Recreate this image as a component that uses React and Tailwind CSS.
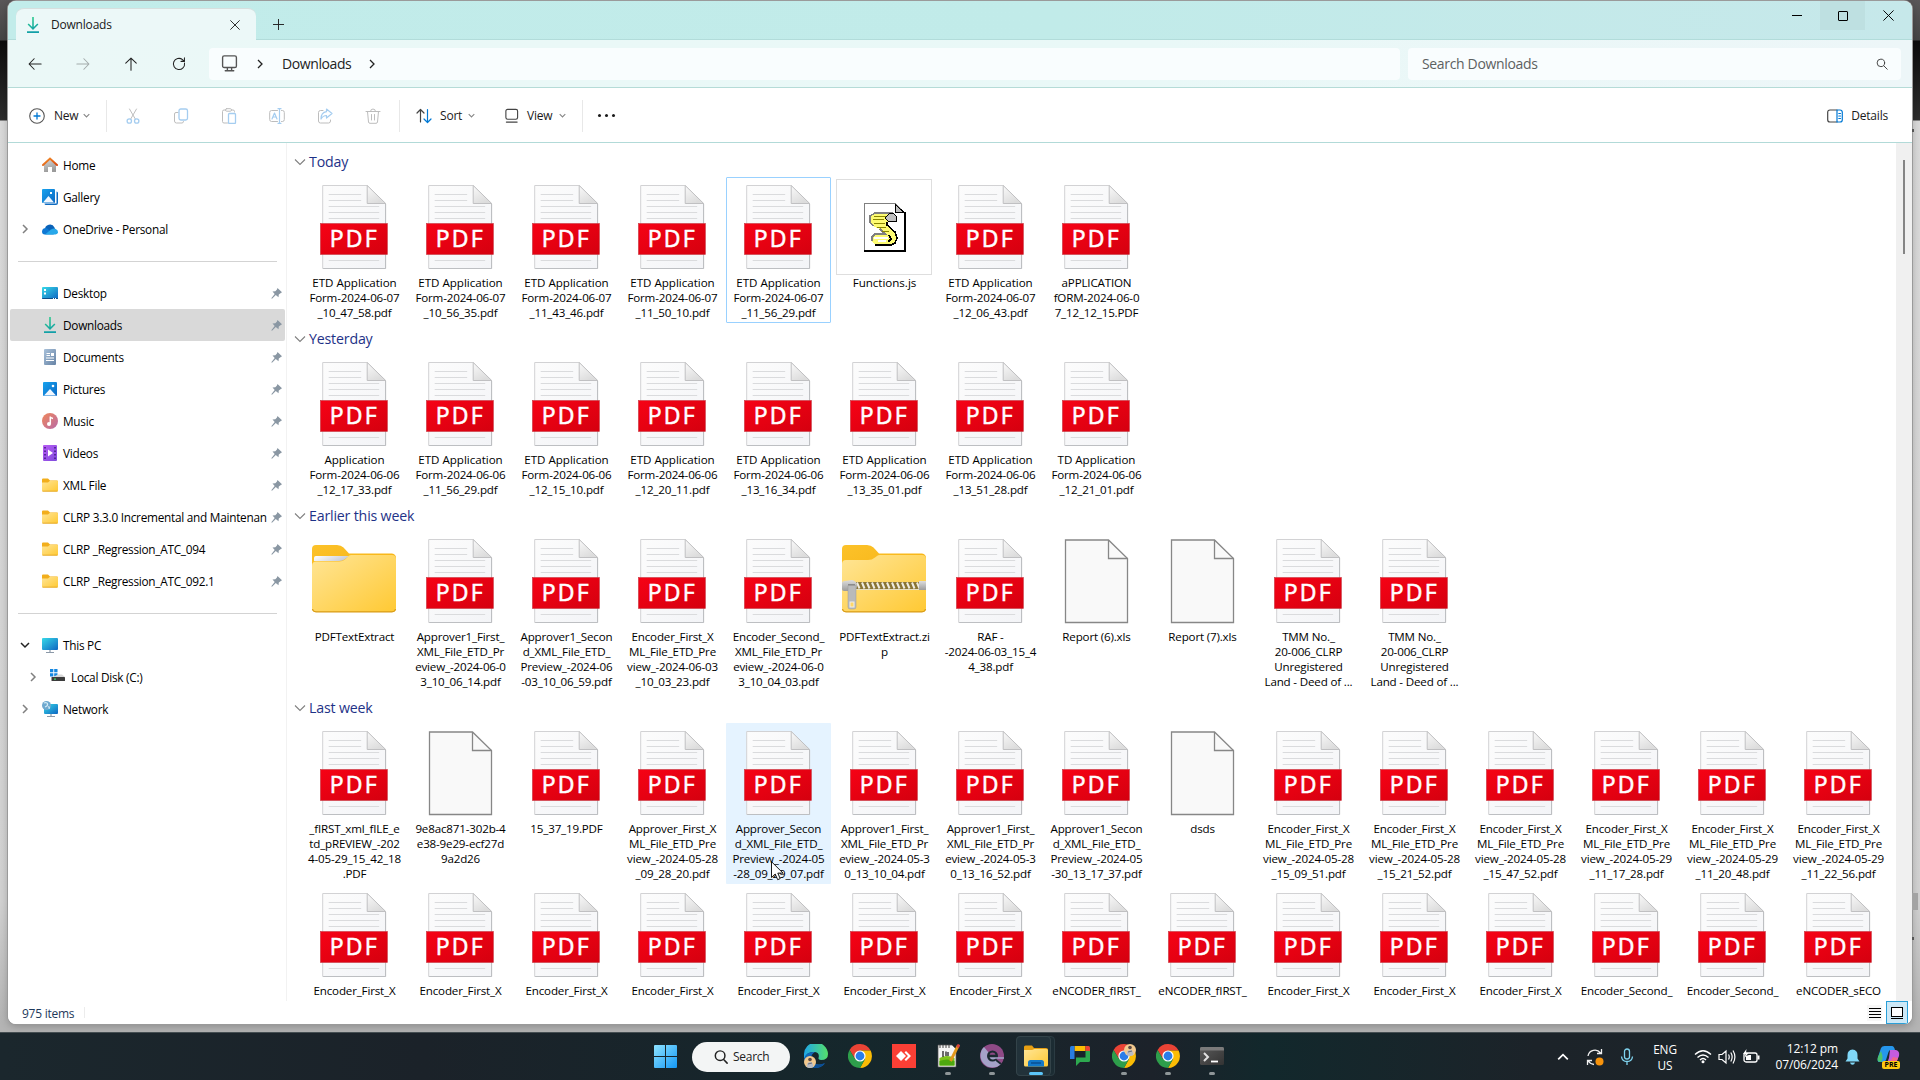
import React from "react";

const pdf = (...lines) => ({ kind: "pdf", lines });
const file = (...lines) => ({ kind: "blank", lines });

const groups = [
  {
    title: "Today",
    items: [
      pdf("ETD Application", "Form-2024-06-07", "_10_47_58.pdf"),
      pdf("ETD Application", "Form-2024-06-07", "_10_56_35.pdf"),
      pdf("ETD Application", "Form-2024-06-07", "_11_43_46.pdf"),
      pdf("ETD Application", "Form-2024-06-07", "_11_50_10.pdf"),
      { ...pdf("ETD Application", "Form-2024-06-07", "_11_56_29.pdf"), focused: true },
      { kind: "js", lines: ["Functions.js"] },
      pdf("ETD Application", "Form-2024-06-07", "_12_06_43.pdf"),
      pdf("aPPLICATION", "fORM-2024-06-0", "7_12_12_15.PDF"),
    ],
  },
  {
    title: "Yesterday",
    items: [
      pdf("Application", "Form-2024-06-06", "_12_17_33.pdf"),
      pdf("ETD Application", "Form-2024-06-06", "_11_56_29.pdf"),
      pdf("ETD Application", "Form-2024-06-06", "_12_15_10.pdf"),
      pdf("ETD Application", "Form-2024-06-06", "_12_20_11.pdf"),
      pdf("ETD Application", "Form-2024-06-06", "_13_16_34.pdf"),
      pdf("ETD Application", "Form-2024-06-06", "_13_35_01.pdf"),
      pdf("ETD Application", "Form-2024-06-06", "_13_51_28.pdf"),
      pdf("TD Application", "Form-2024-06-06", "_12_21_01.pdf"),
    ],
  },
  {
    title: "Earlier this week",
    items: [
      { kind: "folder", lines: ["PDFTextExtract"] },
      pdf("Approver1_First_", "XML_File_ETD_Pr", "eview_-2024-06-0", "3_10_06_14.pdf"),
      pdf("Approver1_Secon", "d_XML_File_ETD_", "Preview_-2024-06", "-03_10_06_59.pdf"),
      pdf("Encoder_First_X", "ML_File_ETD_Pre", "view_-2024-06-03", "_10_03_23.pdf"),
      pdf("Encoder_Second_", "XML_File_ETD_Pr", "eview_-2024-06-0", "3_10_04_03.pdf"),
      { kind: "zip", lines: ["PDFTextExtract.zi", "p"] },
      pdf("RAF -", "-2024-06-03_15_4", "4_38.pdf"),
      file("Report (6).xls"),
      file("Report (7).xls"),
      pdf("TMM No._", "20-006_CLRP", "Unregistered", "Land - Deed of ..."),
      pdf("TMM No._", "20-006_CLRP", "Unregistered", "Land - Deed of ..."),
    ],
  },
  {
    title: "Last week",
    items: [
      pdf("_fIRST_xml_fILE_e", "td_pREVIEW_-202", "4-05-29_15_42_18", ".PDF"),
      file("9e8ac871-302b-4", "e38-9e29-ecf27d", "9a2d26"),
      pdf("15_37_19.PDF"),
      pdf("Approver_First_X", "ML_File_ETD_Pre", "view_-2024-05-28", "_09_28_20.pdf"),
      { ...pdf("Approver_Secon", "d_XML_File_ETD_", "Preview_-2024-05", "-28_09_29_07.pdf"), hovered: true },
      pdf("Approver1_First_", "XML_File_ETD_Pr", "eview_-2024-05-3", "0_13_10_04.pdf"),
      pdf("Approver1_First_", "XML_File_ETD_Pr", "eview_-2024-05-3", "0_13_16_52.pdf"),
      pdf("Approver1_Secon", "d_XML_File_ETD_", "Preview_-2024-05", "-30_13_17_37.pdf"),
      file("dsds"),
      pdf("Encoder_First_X", "ML_File_ETD_Pre", "view_-2024-05-28", "_15_09_51.pdf"),
      pdf("Encoder_First_X", "ML_File_ETD_Pre", "view_-2024-05-28", "_15_21_52.pdf"),
      pdf("Encoder_First_X", "ML_File_ETD_Pre", "view_-2024-05-28", "_15_47_52.pdf"),
      pdf("Encoder_First_X", "ML_File_ETD_Pre", "view_-2024-05-29", "_11_17_28.pdf"),
      pdf("Encoder_First_X", "ML_File_ETD_Pre", "view_-2024-05-29", "_11_20_48.pdf"),
      pdf("Encoder_First_X", "ML_File_ETD_Pre", "view_-2024-05-29", "_11_22_56.pdf"),
      pdf("Encoder_First_X"),
      pdf("Encoder_First_X"),
      pdf("Encoder_First_X"),
      pdf("Encoder_First_X"),
      pdf("Encoder_First_X"),
      pdf("Encoder_First_X"),
      pdf("Encoder_First_X"),
      pdf("eNCODER_fIRST_"),
      pdf("eNCODER_fIRST_"),
      pdf("Encoder_First_X"),
      pdf("Encoder_First_X"),
      pdf("Encoder_First_X"),
      pdf("Encoder_Second_"),
      pdf("Encoder_Second_"),
      pdf("eNCODER_sECO"),
    ],
  },
];

/* Shared gradients */
function Defs() {
  const G = ({ id, a, b, x2 = 1, y2 = 1 }) => (
    <linearGradient id={id} x1="0" y1="0" x2={x2} y2={y2}>
      <stop offset="0" stopColor={a} />
      <stop offset="1" stopColor={b} />
    </linearGradient>
  );
  return (
    <svg className="absolute h-0 w-0">
      <defs>
        <G id="gPage" a="#fcfcfc" b="#f3f4f7" />
        <G id="gRed" a="#f60215" b="#d5000f" />
        <G id="gFold" a="#fafafa" b="#dcdcdc" x2={0.5} />
        <G id="gFolder" a="#ffe596" b="#ffc933" />
        <G id="gTab" a="#fcc22a" b="#f5ae0c" />
        <G id="gPaper" a="#ffffff" b="#c8ccd6" x2={1} y2={0.3} />
        <G id="gDl" a="#2fd08a" b="#129fa8" x2={0.3} />
        <G id="gBlue" a="#17a3ee" b="#0b68c4" />
        <G id="gDesk" a="#36d9e8" b="#0f66c2" />
        <G id="gDoc" a="#a9c1da" b="#6683a5" />
        <G id="gMusic" a="#f0875a" b="#b86aa8" />
        <G id="gVideo" a="#b95cf5" b="#7e4bdc" />
        <G id="gRoof" a="#f5922b" b="#d8470f" />
        <G id="gWall" a="#d9d9d9" b="#9b9b9b" x2={0.3} />
        <G id="gWin" a="#8fe3ff" b="#1397f5" />
        <G id="gMetal" a="#dddddd" b="#9c9c9c" x2={0} />
        <G id="gEdge" a="#1fa6e8" b="#55e06a" y2={0} />
        <G id="gTerm" a="#5a5a5a" b="#333333" />
      </defs>
    </svg>
  );
}

/* Large file icons, drawn in the upper part of a tile */
function PdfIcon() {
  return (
    <svg width="105" height="98" viewBox="0.8 0 105 98" className="block">
      <path d="M21.5 8.5H66L84.5 27V91.5H21.5Z" fill="url(#gPage)" stroke="#d2d2d4" />
      <path d="M84.3 27V91.5H22" fill="none" stroke="#bdbfc2" />
      <path d="M66 8.5V26.5H84.5Z" fill="url(#gFold)" stroke="#c0c0c2" />
      <path d="M27.500 17.500H60M27.500 23.500H60M27.500 29.500H78M27.500 35.500H78M27.500 41.500H78M27.500 83.500H78" stroke="#dadbdd" />
      <rect x="19.200" y="46.500" width="67" height="31" fill="url(#gRed)" stroke="#c93a44" strokeWidth="0.600" />
      <text x="28.500" y="70" textLength="47" fontSize="23" fill="#fff" stroke="#fff" strokeWidth="0.600" fontFamily="'Open Sans','Noto Sans',sans-serif">
        PDF
      </text>
    </svg>
  );
}

function BlankIcon() {
  return (
    <svg width="105" height="98" viewBox="0 0 105 98" className="block">
      <path d="M21.5 9H64.500L83.500 27.500V91.500H21.500Z" fill="#f9f9f9" stroke="#878787" strokeWidth="1.300" />
      <path d="M64.500 9V27.500H83.500" fill="none" stroke="#878787" strokeWidth="1.300" />
    </svg>
  );
}

function FolderIcon({ zip }) {
  const teeth = Array.from({ length: 13 }, (_, i) => 25 + i * 5);
  return (
    <svg width="105" height="98" viewBox="0 0 105 98" className="block">
      <path d="M10 18Q10 14 14 14H35Q39 14 41.500 16.500L47 22.500H90Q94 23 94 27V60H10Z" fill="url(#gTab)" />
      {!zip && <path d="M12 27Q12 25 14 25H47L43 28Q41 30 37 30H12Z" fill="url(#gPaper)" />}
      {zip ? (
        <path d="M10 33Q10 29 14 29H36Q40 29 43 26.500L45 25Q46 24 48 24H90Q94 24 94 28V77Q94 81 90 81H14Q10 81 10 77Z" fill="url(#gFolder)" />
      ) : (
        <path d="M10 35Q10 30.500 14 30.500H37Q41 30.500 43.500 28L46 25.500Q47 24 49 24H90Q94 24 94 28V77Q94 81 90 81H14Q10 81 10 77Z" fill="url(#gFolder)" />
      )}
      <path d="M10.500 78Q11 80.800 14 80.800H90Q93 80.800 93.500 78" fill="none" stroke="#d99c17" strokeWidth="1.200" />
      {zip && (
        <g>
          <rect x="24" y="51" width="64" height="7" fill="#8a7433" />
          {teeth.map((x) => (
            <path key={x} d={`M${x} 51.500L${x + 2.500} 57.500`} stroke="#efece2" strokeWidth="2" />
          ))}
          <path d="M24 58.500H88" stroke="#e8dfc0" />
          <rect x="87" y="50" width="7" height="9" fill="url(#gMetal)" />
          <path d="M10 52Q10 50 13 50L20 49Q25 50 25 55T20 60H12Q10 60 10 58Z" fill="url(#gMetal)" />
          <path d="M16 54H23" stroke="#777" strokeWidth="1.500" />
          <path d="M16 54.500H24V76Q24 78 22 78H18Q16 78 16 76Z" fill="#b9babb" stroke="#9a9a9a" strokeWidth="0.500" />
          <rect x="18" y="71" width="4" height="5" fill="#ffd768" stroke="#eee" />
        </g>
      )}
    </svg>
  );
}

function JsIcon() {
  return (
    <svg width="105" height="98" viewBox="1 0 105 98" className="block" shapeRendering="crispEdges">
      <rect x="5.500" y="2.500" width="95" height="95" fill="#fff" stroke="#dedede" />
      <path d="M33.500 26.500H64L73 35.500V73H33.500Z" fill="#fff" stroke="#808080" />
      <path d="M64 27V35.500H73Z" fill="#c0c0c0" stroke="#000" />
      <path d="M73.500 35V73.500H33" fill="none" stroke="#000" strokeWidth="2" />
      <g transform="translate(1 0)">
        <path
          d="M43 36H61L64 39V44L60 45L55 45V49L63 55L65 61L63 66L59 68H43L40 64V60L43 57H53L48 52L41 49L38 45V39Z"
          fill="#fdfb72"
        />
        <path d="M41 49L38 45V39L43 36H61M40 64V60L43 57H53L48 52" fill="none" stroke="#808080" strokeWidth="1.500" />
        <path d="M61 36L64 39V44H56L53 41L57 37Z" fill="#c0c0c0" stroke="#000" />
        <path d="M55 45V48L63 55L65 61L63 66L59 68H43M57 58L59 62L56 65" fill="none" stroke="#000" strokeWidth="1.500" />
        <path d="M42 39H54M41 42H52M42 46H53M45 50H54M50 54H57" stroke="#8a8500" />
        <path d="M42 61H56M46 64H54" stroke="#fff" strokeWidth="2" />
      </g>
    </svg>
  );
}

function TileIcon({ kind }) {
  if (kind === "pdf") return <PdfIcon />;
  if (kind === "blank") return <BlankIcon />;
  if (kind === "js") return <JsIcon />;
  return <FolderIcon zip={kind === "zip"} />;
}

function Tile({ item }) {
  const state = item.focused
    ? "outline outline-1 -outline-offset-1 outline-[#99d1ff] rounded-[1px]"
    : item.hovered
      ? "bg-[#e5f3ff] rounded-[1px]"
      : "";
  return (
    <div className={`w-[105px] pb-[3px] ${state}`}>
      <TileIcon kind={item.kind} />
      <div className="flex flex-col items-center text-[11.6px] leading-[15px] tracking-[-0.17px] whitespace-pre text-black">
        {item.lines.map((l, i) => (
          <span key={i} className={/Applic|Functions/.test(l) ? "tracking-[-0.03px]" : ""}>
            {l}
          </span>
        ))}
      </div>
    </div>
  );
}

function Group({ group }) {
  return (
    <section>
      <h2 className="flex h-[31px] items-center gap-[3px] pl-[7px] text-[14.2px] font-normal tracking-[-0.18px] text-[#1e3287]">
        <svg width="12" height="8" viewBox="0 0 12 8" fill="none" stroke="#808080" strokeWidth="1.100">
          <path d="M1 1.500L6 6.500L11 1.500" />
        </svg>
        {group.title}
      </h2>
      <div className="grid grid-cols-[repeat(15,105px)] gap-px pl-[15px]">
        {group.items.map((it, i) => (
          <Tile key={i} item={it} />
        ))}
      </div>
    </section>
  );
}

/* Sidebar icons, 16 x 16 */
const sideIcons = {
  home: (
    <>
      <path d="M2 7L8 2L14 7V14.500Q14 15 13.500 15H10V10H6V15H2.500Q2 15 2 14.500Z" fill="url(#gWall)" />
      <path d="M1 8L8 1.500L15 8" fill="none" stroke="url(#gRoof)" strokeWidth="2" strokeLinecap="round" />
    </>
  ),
  gallery: (
    <>
      <path d="M14.500 2.500Q16 2.500 16 4V14Q16 16 14 16H4Q2.500 16 2.500 14.500H14.500Z" fill="#0f6bc0" />
      <rect width="13" height="14" rx="1" fill="url(#gBlue)" />
      <path d="M1 13.500L6.500 7L12 13.500Z" fill="#f2f8ff" />
      <rect x="8" y="3" width="2" height="2" fill="#fff" />
    </>
  ),
  cloud: (
    <>
      <path d="M3 9A5 5 0 0 1 12.500 6.500L14 11L4 13Z" fill="#0a62b8" />
      <path d="M0 10.500A3.500 3.500 0 0 1 5 7.300L12 13.500H3.300A3 3 0 0 1 0 10.500Z" fill="#0f78d4" />
      <path d="M3 13.500L9 8.500Q13 6 15.500 9.500Q17 13 13.500 13.500Z" fill="#28a8ea" />
    </>
  ),
  desktop: (
    <>
      <rect y="2" width="16" height="12" rx="1" fill="url(#gDesk)" />
      <path d="M2 4H4V6H2ZM2 7.500H4V9.500H2Z" fill="#fff" />
      <path d="M0 13H16V13.500Q16 14 15 14H1Q0 14 0 13Z" fill="#0b4f8a" />
      <path d="M11 13.500H12M13 13.500H14" stroke="#fff" />
    </>
  ),
  downloads: (
    <path
      d="M7.200 0H8.800V10L12.300 6.500L13.400 7.600L8 13L2.600 7.600L3.700 6.500L7.200 10ZM2 14.300H14V15.900H2Z"
      fill="url(#gDl)"
    />
  ),
  documents: (
    <>
      <rect x="2" width="12" height="16" rx="1" fill="url(#gDoc)" />
      <path d="M4.500 4.500H8M4.500 6.500H8M4 9H12M4 11.500H12" stroke="#fff" />
      <rect x="9" y="4" width="3" height="3" fill="#fff" />
    </>
  ),
  pictures: (
    <>
      <rect x="1" y="1" width="14" height="14" rx="1" fill="url(#gBlue)" />
      <path d="M2 14.500L8 8L14 14.500Z" fill="#f2f8ff" />
      <circle cx="11" cy="5" r="1.300" fill="#fff" />
    </>
  ),
  music: (
    <>
      <circle cx="8" cy="8" r="8" fill="url(#gMusic)" />
      <circle cx="7" cy="11" r="2" fill="#fff" />
      <path d="M8.300 11V3.500Q8.500 5 11 5.500" fill="none" stroke="#fff" strokeWidth="1.500" />
    </>
  ),
  videos: (
    <>
      <rect x="1" width="14" height="16" rx="1" fill="url(#gVideo)" />
      <path d="M3 2V15M13 2V15" stroke="#3f1a80" strokeWidth="1.500" strokeDasharray="1.500 2" />
      <path d="M6 4.500L11 8L6 11.500Z" fill="#fff" />
    </>
  ),
  folder: (
    <>
      <path d="M0 2.500Q0 1.500 1 1.500H6L8 3.500H15Q16 3.500 16 4.500V10H0Z" fill="#f2ae1c" />
      <path d="M0 5.500H6L8 3.800H15Q16 3.800 16 4.800V13.500Q16 14.500 15 14.500H1Q0 14.500 0 13.500Z" fill="url(#gFolder)" />
      <path d="M0.500 14.200H15.500" stroke="#e0a01c" strokeWidth="0.800" />
    </>
  ),
  pc: (
    <>
      <rect y="1" width="16" height="12" rx="1" fill="url(#gDesk)" />
      <path d="M8 13V15.500M4 15.500H12" stroke="#8b99a8" strokeWidth="1.200" />
    </>
  ),
  disk: (
    <>
      <path d="M0 0H3.300V3.300H0ZM4.200 0H7.500V3.300H4.200ZM0 4.200H3.300V7.500H0ZM4.200 4.200H7.500V7.500H4.200Z" fill="#1587e0" />
      <path d="M3 8L8 5.500H12L15 8Z" fill="#d8d8d8" />
      <rect x="1.500" y="8" width="13.500" height="4" rx="0.500" fill="#3c3c3c" />
      <rect x="4" y="9.500" width="2" height="1.200" fill="#3ce06c" />
    </>
  ),
  network: (
    <>
      <rect x="2" y="3" width="14" height="10" rx="1" fill="url(#gDesk)" />
      <path d="M9 13V15.500M5 15.500H13" stroke="#8b99a8" strokeWidth="1.200" />
      <circle cx="4.500" cy="4.500" r="4.500" fill="#6fa9cf" />
      <path d="M2 2Q5 1 5.500 3T3 6M6 6Q8 5 7 8" fill="none" stroke="#d5ecf6" strokeWidth="1.200" />
    </>
  ),
};

function Chevron({ dir = "right", className = "", size = 9, w = 1.3 }) {
  const d = dir === "right" ? "M3 1L7 5L3 9" : dir === "up" ? "M1 7L5 3L9 7" : "M1 3L5 7L9 3";
  return (
    <svg width={size} height={size} viewBox="0 0 10 10" fill="none" stroke="currentColor" strokeWidth={w} className={`shrink-0 ${className}`}>
      <path d={d} />
    </svg>
  );
}

function Pin() {
  return (
    <svg width="11" height="11" viewBox="0 0 11 11" className="shrink-0" fill="#8a97a3">
      <path d="M6.500 0L11 4.300L9.500 5.300L7.800 6.500L7.500 9.300L4.800 7L1 10.800L0.300 10.200L3.700 6L1.500 3.500L4.300 3.200L5.800 1.800Z" />
    </svg>
  );
}

function SideRow({ icon, label, pinned, expand, active, nested }) {
  return (
    <div className={`mr-[1px] ml-[2px] flex h-8 items-center rounded-[2px] pr-[3px] ${active ? "bg-[#d9d9d9]" : ""} ${nested ? "pl-[18px]" : "pl-[10px]"}`}>
      <div className="flex w-[22px] shrink-0 items-center">
        {expand === "right" && <Chevron className="text-[#808080]" size={10} w={1.5} />}
        {expand === "down" && <Chevron dir="down" className="text-[#222]" size={10} w={1.5} />}
      </div>
      <svg width="16" height="16" viewBox="0 0 16 16" className="shrink-0">
        {sideIcons[icon]}
      </svg>
      <span className="ml-[5px] flex-1 text-[11.8px] leading-4 tracking-[-0.26px] whitespace-nowrap text-black">{label}</span>
      {pinned && <Pin />}
    </div>
  );
}

function SideRule() {
  return (
    <div className="flex h-8 items-center pr-[9px] pl-[10px]">
      <div className="h-px w-full bg-[#d3d3d3]" />
    </div>
  );
}

function Sidebar() {
  return (
    <nav className="w-[279px] shrink-0 border-r border-[#f2f2f2] pt-[6px]">
      <SideRow icon="home" label="Home" />
      <SideRow icon="gallery" label="Gallery" />
      <SideRow icon="cloud" label="OneDrive - Personal" expand="right" />
      <SideRule />
      <SideRow icon="desktop" label="Desktop" pinned />
      <SideRow icon="downloads" label="Downloads" pinned active />
      <SideRow icon="documents" label="Documents" pinned />
      <SideRow icon="pictures" label="Pictures" pinned />
      <SideRow icon="music" label="Music" pinned />
      <SideRow icon="videos" label="Videos" pinned />
      <SideRow icon="folder" label="XML File" pinned />
      <SideRow icon="folder" label="CLRP 3.3.0 Incremental and Maintenan" pinned />
      <SideRow icon="folder" label="CLRP _Regression_ATC_094" pinned />
      <SideRow icon="folder" label="CLRP _Regression_ATC_092.1" pinned />
      <SideRule />
      <SideRow icon="pc" label="This PC" expand="down" />
      <SideRow icon="disk" label="Local Disk (C:)" expand="right" nested />
      <SideRow icon="network" label="Network" expand="right" />
    </nav>
  );
}

function Svg({ size = 16, children, className = "", w = 1, stroke = "currentColor" }) {
  return (
    <svg width={size} height={size} viewBox="0 0 16 16" fill="none" stroke={stroke} strokeWidth={w} strokeLinecap="round" strokeLinejoin="round" className={`shrink-0 ${className}`}>
      {children}
    </svg>
  );
}

function TitleBar() {
  return (
    <div className="flex h-[39px] border-b border-[#b2dcda] bg-[linear-gradient(90deg,#c2ecea_0%,#c1ebe9_55%,#c6e8ea_100%)]">
      <div className="mt-[7px] ml-2 flex h-8 w-[240px] items-center rounded-t-lg border-t border-[#d7dfde] bg-[#ecf8f8] pr-[16px] pl-[9px] shadow-[0_1px_0_#ecf8f8]">
        <svg width="16" height="16" viewBox="0 0 16 16" className="shrink-0">
          {sideIcons.downloads}
        </svg>
        <span className="ml-[10px] flex-1 text-[12px] font-medium tracking-[-0.2px] text-[#1a1a1a]">Downloads</span>
        <Svg size={10} className="text-[#222]" w={1.5}>
          <path d="M1 1L15 15M15 1L1 15" />
        </Svg>
      </div>
      <div className="flex w-11 items-center justify-center pt-[8px]">
        <Svg size={11} className="text-[#222]" w={1.4}>
          <path d="M8 0.500V15.500M0.500 8H15.500" />
        </Svg>
      </div>
      <div className="flex-1" />
      <div className="flex h-[29px] text-black">
        <div className="flex w-[46px] items-center justify-center">
          <div className="h-px w-[10px] bg-black" />
        </div>
        <div className="flex w-[45px] items-center justify-center bg-[#bee0e1]">
          <div className="h-[10px] w-[10px] rounded-[1px] border border-black" />
        </div>
        <div className="flex w-[47px] items-center justify-center pb-px">
          <Svg size={11} w={1.4}>
            <path d="M1 1L15 15M15 1L1 15" />
          </Svg>
        </div>
      </div>
    </div>
  );
}

function NavBar() {
  const cell = "flex w-12 items-center justify-center";
  return (
    <div className="flex h-12 items-center border-b border-[#b5dbd7] bg-[linear-gradient(90deg,#ebf8f7_0%,#e9f8f7_60%,#edf6f8_100%)] pr-[11px] pl-[3px] text-[#222]">
      <div className={cell}>
        <Svg size={14} w={1.2}><path d="M1.500 8H15M7 2L1.200 8L7 14" /></Svg>
      </div>
      <div className={`${cell} text-[#a3abab]`}>
        <Svg size={14} w={1.2}><path d="M14.500 8H1M9 2L14.800 8L9 14" /></Svg>
      </div>
      <div className={cell}>
        <Svg size={14} w={1.2}><path d="M8 1.500V15M2 7L8 1.200L14 7" /></Svg>
      </div>
      <div className={cell}>
        <Svg size={14} w={1.2}><path d="M14.300 7A6.400 6.400 0 1 1 12 3L14 5M14.200 1V5H10.300" /></Svg>
      </div>
      <div className="ml-[6px] flex h-8 w-[1191px] items-center rounded bg-[#f9fdfe] pl-[12px]">
        <Svg size={17} w={1.3} className="text-[#555]">
          <rect x="1.500" y="0.800" width="13" height="11" rx="1.500" />
          <path d="M4 14.800H12M6 12V14.500M10 12V14.500" />
        </Svg>
        <Chevron className="ml-[17px]" size={10} />
        <span className="ml-[17px] w-[70px] text-[14px] tracking-[-0.4px]">Downloads</span>
        <Chevron className="ml-[15px]" size={10} />
      </div>
      <div className="ml-2 flex h-8 flex-1 items-center rounded bg-[#f9fdfe] pr-[13px] pl-[14px]">
        <span className="flex-1 text-[14px] tracking-[-0.34px] text-[#5d6161]">Search Downloads</span>
        <Svg size={12} w={1.3} className="text-[#444]">
          <circle cx="6.500" cy="6.500" r="5" />
          <path d="M10.500 10.500L15 15" />
        </Svg>
      </div>
    </div>
  );
}

function ToolBar() {
  const g = "#bdbdbd";
  const b = "#a5cdf0";
  const rule = <div className="h-8 w-px bg-[#e8e8e8]" />;
  const cell = "flex w-12 items-center justify-center";
  const label = "pt-px text-[12px] tracking-[-0.2px] text-[#1a1a1a]";
  return (
    <div className="flex h-[55px] items-center border-b border-[#b2dad8] bg-white pt-px pr-[24px] pl-[21px]">
      <Svg size={16} className="text-[#555]" w={1.1}>
        <circle cx="8" cy="8" r="7.300" />
        <path d="M8 5V11M5 8H11" stroke="#0078d4" strokeWidth="1.300" />
      </Svg>
      <span className={`ml-[9px] w-[26px] ${label}`}>New</span>
      <Chevron dir="down" size={7} className="ml-[3px] text-[#888]" w={1.6} />
      <div className="w-4" />
      {rule}
      <div className="w-[2px]" />
      <div className={cell}>
        <Svg stroke={g}>
          <path d="M4.500 1L10.300 11M11.500 1L5.700 11" />
          <g stroke={b} strokeWidth="1.300"><circle cx="4.300" cy="13" r="2.200" /><circle cx="11.700" cy="13" r="2.200" /></g>
        </Svg>
      </div>
      <div className={cell}>
        <Svg stroke={g}>
          <path d="M5 4.500H3Q1.500 4.500 1.500 6V13Q1.500 15 3.500 15H9Q10.500 15 10.500 13.500" />
          <rect x="6" y="1" width="8.500" height="11" rx="1.800" stroke={b} strokeWidth="1.300" />
        </Svg>
      </div>
      <div className={cell}>
        <Svg stroke={g}>
          <path d="M4.500 2H3Q1.500 2 1.500 3.500V13.500Q1.500 15 3 15H6.500M10.500 2H12Q13.500 2 13.500 3.500V4" />
          <rect x="4.500" y="0.700" width="6" height="2.500" rx="1.200" />
          <rect x="7.500" y="5.500" width="7" height="10" rx="1" stroke={b} strokeWidth="1.300" />
        </Svg>
      </div>
      <div className={cell}>
        <Svg stroke={g}>
          <path d="M8.500 2.500H2.500Q0.700 2.500 0.700 4.500V11.500Q0.700 13.500 2.500 13.500H8.500M12.500 2.500H13.500Q15.300 2.500 15.300 4.500V11.500Q15.300 13.500 13.500 13.500H12.500" />
          <path d="M10.500 0.700V15.300M9 0.700H12M9 15.300H12M3 11L5.500 5L8 11M4 9H7" stroke={b} strokeWidth="1.200" />
        </Svg>
      </div>
      <div className={cell}>
        <Svg stroke={g}>
          <path d="M6 2.500H3.500Q1.500 2.500 1.500 4.500V13Q1.500 15 3.500 15H11.500Q13.500 15 13.500 13V12" />
          <path d="M9.500 1L15 5.500L9.500 10V7.500Q6 7.500 4 11Q4 4.500 9.500 3.700Z" stroke={b} strokeWidth="1.200" />
        </Svg>
      </div>
      <div className={cell}>
        <Svg stroke={g}>
          <path d="M1 3.500H15M5.500 3.500Q5.500 1 8 1T10.500 3.500M2.500 3.500L3.500 14Q3.700 15.300 5 15.300H11Q12.300 15.300 12.500 14L13.500 3.500M6.500 6.500V12M9.500 6.500V12" />
        </Svg>
      </div>
      <div className="w-[2px]" />
      {rule}
      <Svg className="ml-[16px] text-[#444]" w={1.2}>
        <path d="M4.500 14V1.500M1 5L4.500 1.500L8 5" />
        <path d="M11.500 1.500V14.500M8 11L11.500 14.500L15 11" stroke="#0078d4" />
      </Svg>
      <span className={`ml-[8px] w-[25px] ${label}`}>Sort</span>
      <Chevron dir="down" size={7} className="ml-[3px] text-[#888]" w={1.6} />
      <Svg size={15} className="ml-[29px] text-[#444]" w={1.2}>
        <rect x="2" y="1.500" width="12.500" height="10.500" rx="1.800" />
        <path d="M2.500 15H14" />
      </Svg>
      <span className={`ml-[8px] w-[29px] ${label}`}>View</span>
      <Chevron dir="down" size={7} className="ml-[3px] text-[#888]" w={1.6} />
      <div className="w-4" />
      {rule}
      <div className="ml-[15px] flex gap-[4px]">
        <i className="h-[3px] w-[3px] rounded-full bg-[#1a1a1a]" />
        <i className="h-[3px] w-[3px] rounded-full bg-[#1a1a1a]" />
        <i className="h-[3px] w-[3px] rounded-full bg-[#1a1a1a]" />
      </div>
      <div className="flex-1" />
      <Svg size={16} className="text-[#444]" w={1.2}>
        <path d="M10 2H3Q0.700 2 0.700 4.300V11.700Q0.700 14 3 14H10" />
        <path d="M10 2H13Q15.300 2 15.300 4.300V11.700Q15.300 14 13 14H10ZM11.800 5.500H13.500M11.800 8H13.500M11.800 10.500H13.500" stroke="#0078d4" />
      </Svg>
      <span className={`ml-[8px] ${label}`}>Details</span>
    </div>
  );
}

function StatusBar() {
  return (
    <div className="flex h-[23px] items-center bg-white pr-[4px] pl-[14px]">
      <span className="pt-[2px] text-[12px] tracking-[-0.25px] text-[#1e395b]">975 items</span>
      <div className="ml-[10px] h-[11px] w-px bg-[#ececec]" />
      <div className="flex-1" />
      <div className="mr-1 flex h-4 w-[15px] flex-col items-center justify-center gap-[2px] bg-[#f7f7f7]">
        {[0, 1, 2, 3].map((i) => (
          <i key={i} className="h-px w-3 bg-black" />
        ))}
      </div>
      <div className="flex h-[23px] w-[22px] flex-col items-center justify-center gap-px border border-[#2a9fd8] bg-[#cde8f6] pt-px">
        <div className="h-[10px] w-3 border border-black bg-white" />
        <div className="h-px w-3 bg-black" />
      </div>
    </div>
  );
}

function Cursor() {
  return (
    <svg width="13" height="20" viewBox="0 0 13 20" className="absolute top-[861px] left-[771px] z-10">
      <path d="M0.500 0.700V16.500L4.200 13L6.700 18.700L9.200 17.600L6.800 12.100H12Z" fill="#fff" stroke="#000" strokeWidth="0.900" />
    </svg>
  );
}

/* Scrollbar of the page behind the window, visible at the right edge */
function BackdropScrollbar() {
  return (
    <div className="flex w-[8px] flex-col items-start pt-[129px] text-[#555]">
      <div className="h-[3px] w-[2px] bg-current" />
      <div className="mt-[761px] h-[17px] w-[6px] bg-[#a3a3a3]" />
      <div className="mt-[27px] h-[3px] w-[2px] bg-current" />
    </div>
  );
}

/* Taskbar */
function Chrome() {
  return (
    <svg width="24" height="24" viewBox="0 0 24 24">
      <path d="M12 6.500H22.600A12 12 0 0 0 1.600 6L7 15Z" fill="#ea4335" />
      <path d="M17 15L12 24A12 12 0 0 0 22.600 6.500H12Z" fill="#fbbc05" />
      <path d="M7 15L1.600 6A12 12 0 0 0 12 24L17 15Z" fill="#2e9e4b" />
      <circle cx="12" cy="12" r="5.600" fill="#fff" />
      <circle cx="12" cy="12" r="4.400" fill="#2b7de9" />
    </svg>
  );
}

function Avatar({ className }) {
  return (
    <svg width="12" height="12" viewBox="0 0 12 12" className={`absolute ${className}`}>
      <circle cx="6" cy="6" r="6" fill="#f3c98e" />
      <circle cx="6" cy="3.500" r="1.800" fill="#5d4a44" />
      <path d="M2.500 11Q3 6 6 5.800T9.500 11Q6 13 2.500 11Z" fill="#b9bcc4" />
      <path d="M4 8L8 7" stroke="#6d6a72" />
    </svg>
  );
}

const taskIcons = [
  {
    id: "edge",
    node: (
      <>
        <svg width="24" height="24" viewBox="0 0 24 24">
          <path d="M0 11A12 12 0 0 1 24 10Q24 16 17 16Q14 16 14.500 14Q16 9 11 8Q3 7 0 15Z" fill="url(#gEdge)" />
          <path d="M0 15Q2 7 11 8Q7 10 7 15Q9 21 16 20.500L21 19.500Q17 24 11 24Q2 23 0 15Z" fill="#1268b8" />
          <path d="M9 12Q6 20 15 21L21 19Q17 24 11 24Q3 20 9 12Z" fill="#0c4d94" />
        </svg>
        <Avatar className="bottom-0 left-0" />
      </>
    ),
  },
  { id: "chrome", node: <Chrome /> },
  {
    id: "anydesk",
    node: (
      <svg width="24" height="24" viewBox="0 0 24 24">
        <rect width="24" height="24" fill="#fb3f35" />
        <path d="M9 7L14 12L9 17L4 12Z" fill="#fff" />
        <path d="M12.500 8.500L14 7L19 12L14 17L12.500 15.500L16 12Z" fill="#fff" />
      </svg>
    ),
  },
  {
    id: "notepad",
    run: true,
    node: (
      <svg width="24" height="24" viewBox="0 0 24 24">
        <path d="M2 1H16L20 5V23H2Z" fill="#f5f5f5" stroke="#555" strokeWidth="0.700" />
        <path d="M3.500 14Q11 10 18.500 14V21.500H3.500Z" fill="#7fc31c" />
        <path d="M3.500 17Q11 14 18.500 17V21.500H3.500Z" fill="#4ea80f" />
        <path d="M4 1V4M7 1V4M10 1V4M13 1V4" stroke="#444" />
        <path d="M7 7V13M10 7.500V12M12 8V12" stroke="#222" strokeWidth="1.300" />
        <path d="M22 2L14.500 17" stroke="#e3981c" strokeWidth="2.800" />
        <path d="M23 0.500L21.500 3.500" stroke="#d8433b" strokeWidth="2.800" />
      </svg>
    ),
  },
  {
    id: "eclipse",
    run: true,
    node: (
      <svg width="24" height="24" viewBox="0 0 24 24">
        <circle cx="12" cy="12" r="12" fill="#8f4a86" />
        <path d="M4 3A12 12 0 1 0 21 20L14 14L9 9Z" fill="#a5a3c9" />
        <circle cx="12.500" cy="12" r="5.500" fill="#1b2a31" />
        <path d="M9.500 10.800Q10 8.500 12.500 8.500T15.500 10.800Z" fill="#8f4a86" />
        <path d="M9.500 13.200H24V14.800H15.500Q14 15.800 12.500 15.500Q10.500 15.500 9.500 13.200Z" fill="#a5a3c9" />
        <path d="M16 16L21 20" stroke="#1b2a31" strokeWidth="1.800" />
      </svg>
    ),
  },
  {
    id: "explorer",
    run: true,
    active: true,
    node: (
      <svg width="24" height="24" viewBox="0 0 24 24">
        <path d="M0 3Q0 1.500 1.500 1.500H8L10 4H22Q24 4 24 5.500V12H0Z" fill="#e8a013" />
        <path d="M0 6H8L10.500 5H22.500Q24 5 24 6.500V21Q24 22.500 22.500 22.500H1.500Q0 22.500 0 21Z" fill="url(#gFolder)" />
        <path d="M4 22.500V18.500Q4 16 6.500 16H17.500Q20 16 20 18.500V22.500Z" fill="#1278c8" />
        <path d="M7 19H17" stroke="#0a4f92" strokeWidth="1.500" />
      </svg>
    ),
  },
  {
    id: "chat",
    node: (
      <svg width="20" height="20" viewBox="0 0 20 20">
        <path d="M4.500 0H15.500V5H4.500Z" fill="#fbbc04" />
        <path d="M0 5V1.500Q0 0 1.500 0H4.500V13H0Z" fill="#2a7de1" />
        <path d="M15.500 0H18.500Q20 0 20 1.500V5H15.500Z" fill="#ea4335" />
        <path d="M15.500 5H20V14.500Q20 16 18.500 16H10L6 20V11.500H15.500Z" fill="#2da94f" />
      </svg>
    ),
  },
  {
    id: "chrome-profile",
    run: true,
    node: (
      <>
        <Chrome />
        <Avatar className="top-0 right-0" />
      </>
    ),
  },
  { id: "chrome-2", run: true, node: <Chrome /> },
  {
    id: "terminal",
    run: true,
    node: (
      <svg width="24" height="18" viewBox="0 0 24 18">
        <rect width="24" height="18" rx="1.500" fill="url(#gTerm)" />
        <path d="M0 1.500Q0 0 1.500 0H22.500Q24 0 24 1.500V3.500H0Z" fill="#7b7b7b" />
        <path d="M4 6L8 10L4 14" fill="none" stroke="#e0e0e0" strokeWidth="2" />
        <path d="M11 14.500H18" stroke="#fff" strokeWidth="1.800" />
      </svg>
    ),
  },
];

function Taskbar() {
  return (
    <footer className="flex h-12 items-stretch border-t border-[#454e52] bg-[linear-gradient(90deg,#1b272d_0%,#1b2229_22%,#15272c_45%,#1c222a_60%,#12282c_66%,#1c2329_80%,#1c262b_100%)] text-white">
      <div className="flex items-center pl-[654px]">
        <svg width="23" height="23" viewBox="0 0 23 23">
          <path d="M0 1Q0 0 1 0H11V11H0ZM12 0H22Q23 0 23 1V11H12ZM0 12H11V23H1Q0 23 0 22ZM12 12H23V22Q23 23 22 23H12Z" fill="url(#gWin)" />
        </svg>
        <div className="ml-[15px] flex h-[30px] w-[98px] items-center rounded-full bg-[#f3f5f5] pl-[22px]">
          <Svg size={14} w={1.7} className="text-[#222]">
            <circle cx="7" cy="6.500" r="5.500" />
            <path d="M11 10.800L15 15" />
          </Svg>
          <span className="ml-[5px] text-[12px] tracking-[-0.28px] text-[#222]">Search</span>
        </div>
      </div>
      <div className="ml-[4px] flex items-center">
        {taskIcons.map((t) => (
          <div key={t.id} className="relative flex h-full w-11 items-center justify-center pb-px">
            {t.active && <div className="absolute top-[3px] left-[2px] h-10 w-[39px] rounded-[4px] border border-[#2b3b42] bg-[#1c2c33]" />}
            {t.active && <div className="absolute top-[3px] left-[2px] h-10 w-[35px] rounded-[4px] border border-[#334349] bg-[#22323a]" />}
            <div className="relative">{t.node}</div>
            {t.run && (
              <div className={`absolute top-[39px] h-[3px] rounded-full ${t.active ? "w-[14px] bg-[#5cc6fa]" : "w-[6px] bg-[#8f9698]"}`} />
            )}
          </div>
        ))}
      </div>
      <div className="flex-1" />
      <div className="flex items-center pr-[19px]">
        <Chevron dir="up" size={12} w={1.4} />
        <div className="ml-[17px] flex">
          <svg width="18" height="18" viewBox="0 0 18 18" fill="none" stroke="#f0f0f0" strokeWidth="1.300">
            <path d="M2 8A7 7 0 0 1 14.500 5M15.500 1V5.500H11M1.500 17V12.500H6M2 12.500Q4 16 8 16.500" />
            <circle cx="13.500" cy="13.500" r="4" fill="#f7930c" stroke="none" />
          </svg>
        </div>
        <svg width="14" height="18" viewBox="0 0 14 18" className="ml-[16px]" fill="none" stroke="#7fd3ee" strokeWidth="1.300">
          <rect x="4.500" y="1" width="5" height="10" rx="2.500" />
          <path d="M1.500 8.500Q2 13.500 7 13.500T12.500 8.500M7 13.500V17" />
        </svg>
        <div className="ml-[19px] w-[24px] text-center text-[11.8px] leading-4 tracking-[-0.1px]">
          <div>ENG</div>
          <div>US</div>
        </div>
        <svg width="18" height="15" viewBox="0 0 18 15" className="ml-[17px]" fill="none" stroke="#fff" strokeWidth="1.400">
          <path d="M1 5.500Q9-2 17 5.500M3.500 8.500Q9 3.500 14.500 8.500M6 11Q9 8 12 11" />
          <circle cx="9" cy="12.800" r="1.500" fill="#fff" stroke="none" />
        </svg>
        <svg width="18" height="16" viewBox="0 0 18 16" className="ml-[6px]" fill="none" stroke="#fff" strokeWidth="1.200">
          <path d="M1 5.500H4L8 2V14L4 10.500H1ZM10.500 5.500Q12 8 10.500 10.500M12.800 3.500Q15.500 8 12.800 12.500M15 1.500Q18.800 8 15 14.500" />
        </svg>
        <svg width="18" height="15" viewBox="0 0 18 15" className="ml-[6px]">
          <rect x="2" y="4" width="13" height="9" rx="2" fill="none" stroke="#fff" strokeWidth="1.300" />
          <path d="M4 7L7 6H9V11H4ZM15.500 6.500H17.500V10.500H15.500Z" fill="#fff" />
          <path d="M4.500 0L1 5H3.500L2.500 9L6.500 4H4Z" fill="#fff" />
        </svg>
        <div className="ml-[13px] w-[65px] text-right text-[12px] leading-4 tracking-[-0.12px] whitespace-nowrap">
          <div>12:12 pm</div>
          <div>07/06/2024</div>
        </div>
        <svg width="15" height="16" viewBox="0 0 15 16" className="ml-[7px]" fill="#80d8f8">
          <path d="M7.500 0.500Q12.500 1 12.500 6V9.500L14.500 12.500H0.500L2.500 9.500V6Q2.500 1 7.500 0.500ZM5 13.500H10Q9.500 15.700 7.500 15.700T5 13.500Z" />
        </svg>
        <div className="relative ml-[16px] h-[24px] w-[25px]">
          <svg width="25" height="24" viewBox="0 0 25 24">
            <path d="M5 3Q6 1 8.500 1H16Q18 1 19 5H15Q13 5 12.500 7L10 15Q9 17 7 17H3Q1 17 2 12Z" fill="#2696ec" />
            <path d="M2 12L5 6Q8 14 5 17Q0 17 2 12Z" fill="#4cc26c" />
            <path d="M14 5H20Q24 6 23 11L20 18H10Q12 17 13 13Z" fill="#c45ce0" />
            <path d="M17 12L22 13L20 18H13Z" fill="#f2668b" />
          </svg>
          <span className="absolute bottom-0 left-[6px] h-[8px] w-[18px] rounded-[2px] bg-[#fdc912] text-center text-[7px] leading-[8px] font-bold text-black">PRE</span>
        </div>
      </div>
    </footer>
  );
}

export default function App() {
  return (
    <div className="relative flex h-[1080px] w-[1920px] flex-col overflow-hidden bg-[linear-gradient(180deg,#5a5759_0,#454545_40px,#0c0c0c_41px,#2e2e2e_120px,#dadada_121px,#d2d2d2_900px,#b4b4b4_1024px,#b4b4b4_1080px)] font-['Open_Sans','Noto_Sans',sans-serif]">
      <Defs />
      <div className="flex">
        <main className="mt-px ml-2 flex h-[1023px] w-[1904px] shrink-0 flex-col overflow-hidden rounded-lg bg-white shadow-[0_0_0_1px_#9a9a9a,0_2px_8px_rgba(0,0,0,0.25)]">
          <TitleBar />
          <NavBar />
          <ToolBar />
          <div className="flex h-[858px] shrink-0">
            <Sidebar />
            <div className="h-full flex-1 overflow-hidden pt-[3px]">
              {groups.map((g) => (
                <Group key={g.title} group={g} />
              ))}
            </div>
            <div className="flex w-4 shrink-0 justify-center bg-[#f0f0f0] pt-[17px]">
              <div className="h-[94px] w-[2px] bg-[#858585]" />
            </div>
          </div>
          <StatusBar />
        </main>
        <BackdropScrollbar />
      </div>
      <div className="flex-1" />
      <Taskbar />
      <Cursor />
    </div>
  );
}
